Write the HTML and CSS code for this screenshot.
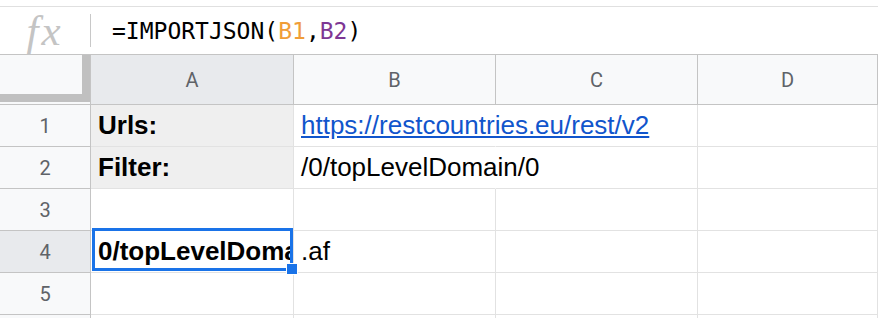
FILE: index.html
```html
<!DOCTYPE html>
<html lang="en">
<head>
    <meta charset="UTF-8">
    <title>IMPORTJSON sheet</title>
    <link rel="stylesheet" href="styles.css">
</head>
<body>
    <div class="formula-bar">
        <div class="fx">fx</div>
        <div class="divider"></div>
        <div class="formula">=IMPORTJSON(<span class="ref-1">B1</span>,<span class="ref-2">B2</span>)</div>
    </div>

    <div class="sheet">
        <div class="corner"><div class="freeze"></div></div>
        <div class="col-head active">A</div>
        <div class="col-head">B</div>
        <div class="col-head">C</div>
        <div class="col-head">D</div>

        <div class="row-head">1</div>
        <div class="cell filled bold">Urls:</div>
        <div class="cell spill"><a href="#">https://restcountries.eu/rest/v2</a></div>
        <div class="cell"></div>
        <div class="cell"></div>

        <div class="row-head">2</div>
        <div class="cell filled bold">Filter:</div>
        <div class="cell spill">/0/topLevelDomain/0</div>
        <div class="cell"></div>
        <div class="cell"></div>

        <div class="row-head">3</div>
        <div class="cell"></div>
        <div class="cell"></div>
        <div class="cell"></div>
        <div class="cell"></div>

        <div class="row-head active">4</div>
        <div class="cell bold selected">
            <span class="clip">0/topLevelDomain/0</span>
            <span class="selection"><span class="handle"></span></span>
        </div>
        <div class="cell">.af</div>
        <div class="cell"></div>
        <div class="cell"></div>

        <div class="row-head">5</div>
        <div class="cell"></div>
        <div class="cell"></div>
        <div class="cell"></div>
        <div class="cell"></div>

        <!-- row 6 only peeks in at the bottom edge -->
        <div class="row-head"></div>
        <div class="cell"></div>
        <div class="cell"></div>
        <div class="cell"></div>
        <div class="cell"></div>
    </div>
</body>
</html>
```

FILE: styles.css
```css
body { margin: 0; height: 318px; background: #fff; font-family: "Liberation Sans", Arial, sans-serif; overflow: hidden; }

/* formula bar */
.formula-bar { margin-top: 6px; height: 47px; border-top: 1px solid #e0e0e0; border-bottom: 1px solid #c4c4c4; display: flex; align-items: center; }
.fx { width: 90px; text-align: center; font: italic 43px "Liberation Serif", serif; color: #c4c4c4; letter-spacing: 3px; }
.divider { width: 1px; height: 33px; background: #c8c8c8; }
.formula { margin-left: 21px; font: 23px "DejaVu Sans Mono", monospace; color: #000; }
.ref-1 { color: #f09d38; }
.ref-2 { color: #7e3794; }

/* grid */
.sheet { display: grid; grid-template-columns: 91px 203px 202px 202px 1fr; grid-template-rows: 50px; grid-auto-rows: 42px; }
.sheet > div { box-sizing: border-box; border-right: 1px solid #e2e2e2; border-bottom: 1px solid #e2e2e2; }

.corner { background: #f8f9fa; border-color: #c4c4c4 !important; }
.freeze { height: calc(100% - 2px); box-shadow: inset -8px -8px 0 #c0c0c0; }

.col-head, .row-head { display: flex; align-items: center; justify-content: center; background: #f8f9fa; font: 20px Roboto, sans-serif; color: #5f6368; border-color: #c4c4c4 !important; }
.active { background: #e8eaed; }

.cell { display: flex; align-items: flex-end; padding: 0 7px 6px; font-size: 26px; line-height: 30px; white-space: nowrap; color: #000; min-width: 0; }
.cell a { color: #1155cc; text-decoration: underline; }
.filled { background: #efefef; }
.bold { font-weight: bold; }
.spill { border-right-color: transparent !important; }

.selected { position: relative; padding-right: 0; }
.clip { overflow: hidden; min-width: 0; }
.selection { position: absolute; top: -3px; left: 1px; right: 0; bottom: 1px; border: 3px solid #1a73e8; }
.handle { position: absolute; right: -8px; bottom: -7px; width: 10px; height: 10px; background: #1a73e8; border: 1px solid #fff; }
```
